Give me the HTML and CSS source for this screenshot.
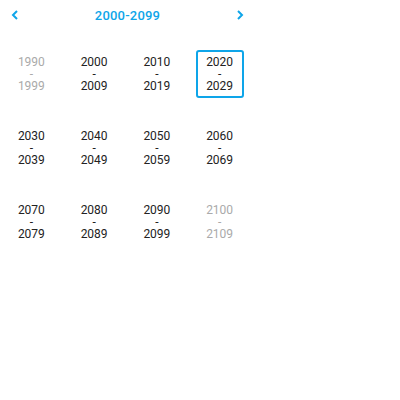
FILE: index.html
```html
<!DOCTYPE html>
<html>
<head>
<meta charset="utf-8">
<link rel="stylesheet" href="styles.css">
</head>
<body>
<div class="picker">
  <div class="header">
    <button class="nav"><svg width="8" height="10" viewBox="0 0 8 10"><path d="M6 1 L2 5 L6 9" fill="none" stroke="#0ea5e9" stroke-width="2"/></svg></button>
    <div class="title">2000-2099</div>
    <button class="nav"><svg width="8" height="10" viewBox="0 0 8 10"><path d="M2 1 L6 5 L2 9" fill="none" stroke="#0ea5e9" stroke-width="2"/></svg></button>
  </div>
  <div class="grid">
    <div class="cell muted"><div class="box">1990<br>-<br>1999</div></div>
    <div class="cell"><div class="box">2000<br>-<br>2009</div></div>
    <div class="cell"><div class="box">2010<br>-<br>2019</div></div>
    <div class="cell"><div class="box selected">2020<br>-<br>2029</div></div>
    <div class="cell"><div class="box">2030<br>-<br>2039</div></div>
    <div class="cell"><div class="box">2040<br>-<br>2049</div></div>
    <div class="cell"><div class="box">2050<br>-<br>2059</div></div>
    <div class="cell"><div class="box">2060<br>-<br>2069</div></div>
    <div class="cell"><div class="box">2070<br>-<br>2079</div></div>
    <div class="cell"><div class="box">2080<br>-<br>2089</div></div>
    <div class="cell"><div class="box">2090<br>-<br>2099</div></div>
    <div class="cell muted"><div class="box">2100<br>-<br>2109</div></div>
  </div>
</div>
</body>
</html>
```
FILE: styles.css
```css
html, body { margin: 0; padding: 0; background: #fff; }
body { font-family: Roboto, "Noto Sans", sans-serif; }
.picker { width: 251px; }
.header {
  height: 30px;
  display: flex;
  align-items: center;
  justify-content: space-between;
  padding: 0 6px 0 10px;
}
.nav {
  border: 0; background: none; padding: 0; width: 10px; height: 12px;
  display: flex; align-items: center; justify-content: center; cursor: pointer;
}
.title { color: #0ea5e9; font-size: 13px; font-weight: 500; letter-spacing: 0.2px; }
.grid {
  display: grid;
  grid-template-columns: repeat(4, 1fr);
  grid-auto-rows: 74px;
  padding: 7px 0 0 0;
}
.cell { display: flex; align-items: center; justify-content: center; }
.box {
  width: 48px; height: 48px; box-sizing: border-box;
  display: flex; flex-direction: column; justify-content: center; align-items: center;
  font-size: 12px; line-height: 12px; color: #222; text-align: center;
  border: 2px solid transparent; border-radius: 3px;
}
.box.selected { border-color: #0ea5e9; }
.muted .box { color: #aaa; }
```
